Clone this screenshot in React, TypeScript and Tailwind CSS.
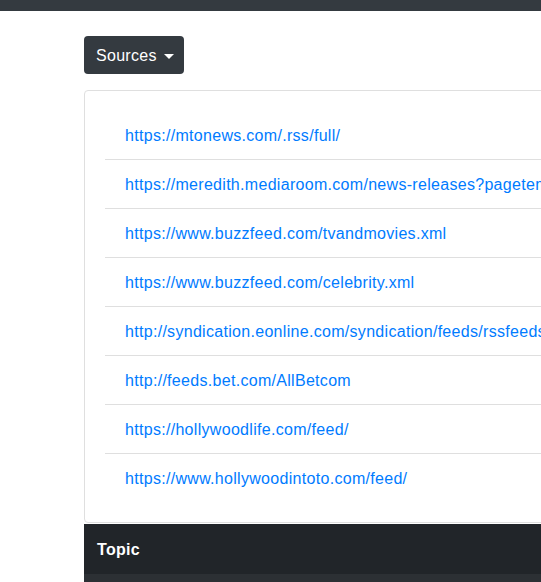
const sources = [
  'https://mtonews.com/.rss/full/',
  'https://meredith.mediaroom.com/news-releases?pagetemplate=rss',
  'https://www.buzzfeed.com/tvandmovies.xml',
  'https://www.buzzfeed.com/celebrity.xml',
  'http://syndication.eonline.com/syndication/feeds/rssfeeds/topstories.xml',
  'http://feeds.bet.com/AllBetcom',
  'https://hollywoodlife.com/feed/',
  'https://www.hollywoodintoto.com/feed/',
];

export default function App() {
  return (
    <div className="w-[541px] h-[582px] overflow-hidden bg-white font-['Liberation_Sans',Arial,sans-serif] text-[16px] tracking-[0.3px] text-[#212529]">
      <div className="h-[11px] bg-[#343a40]" />
      <div className="w-[1100px] pl-[84px] pt-[25px]">
        <button className="flex items-center gap-[7px] h-[38px] pl-[12px] pr-[10px] pt-[2px] rounded-[4px] bg-[#343a40] text-white leading-6">
          Sources
          <span className="w-0 h-0 border-x-[5px] border-x-transparent border-t-[5px] border-t-white" />
        </button>
        <div className="mt-[16px] border border-[#dfdfdf] rounded-[4px] p-[20px]">
          <ul>
            {sources.map((url, i) => (
              <li
                key={url}
                className={`px-[20px] pt-[13px] pb-[11px] leading-6 whitespace-nowrap ${i > 0 ? 'border-t border-[#dfdfdf]' : ''}`}
              >
                <a className="text-[#007bff]">{url}</a>
              </li>
            ))}
          </ul>
        </div>
        <table className="mt-[1px] w-full border-collapse">
          <thead>
            <tr className="bg-[#212529] text-white">
              <th className="text-left font-bold pl-[13px] pr-[12px] pt-[14px] pb-[12px] leading-6">Topic</th>
            </tr>
          </thead>
          <tbody>
            <tr className="bg-[#2c3034]">
              <td className="px-[12px] py-[12px] leading-6 text-white">&nbsp;</td>
            </tr>
          </tbody>
        </table>
      </div>
    </div>
  );
}
